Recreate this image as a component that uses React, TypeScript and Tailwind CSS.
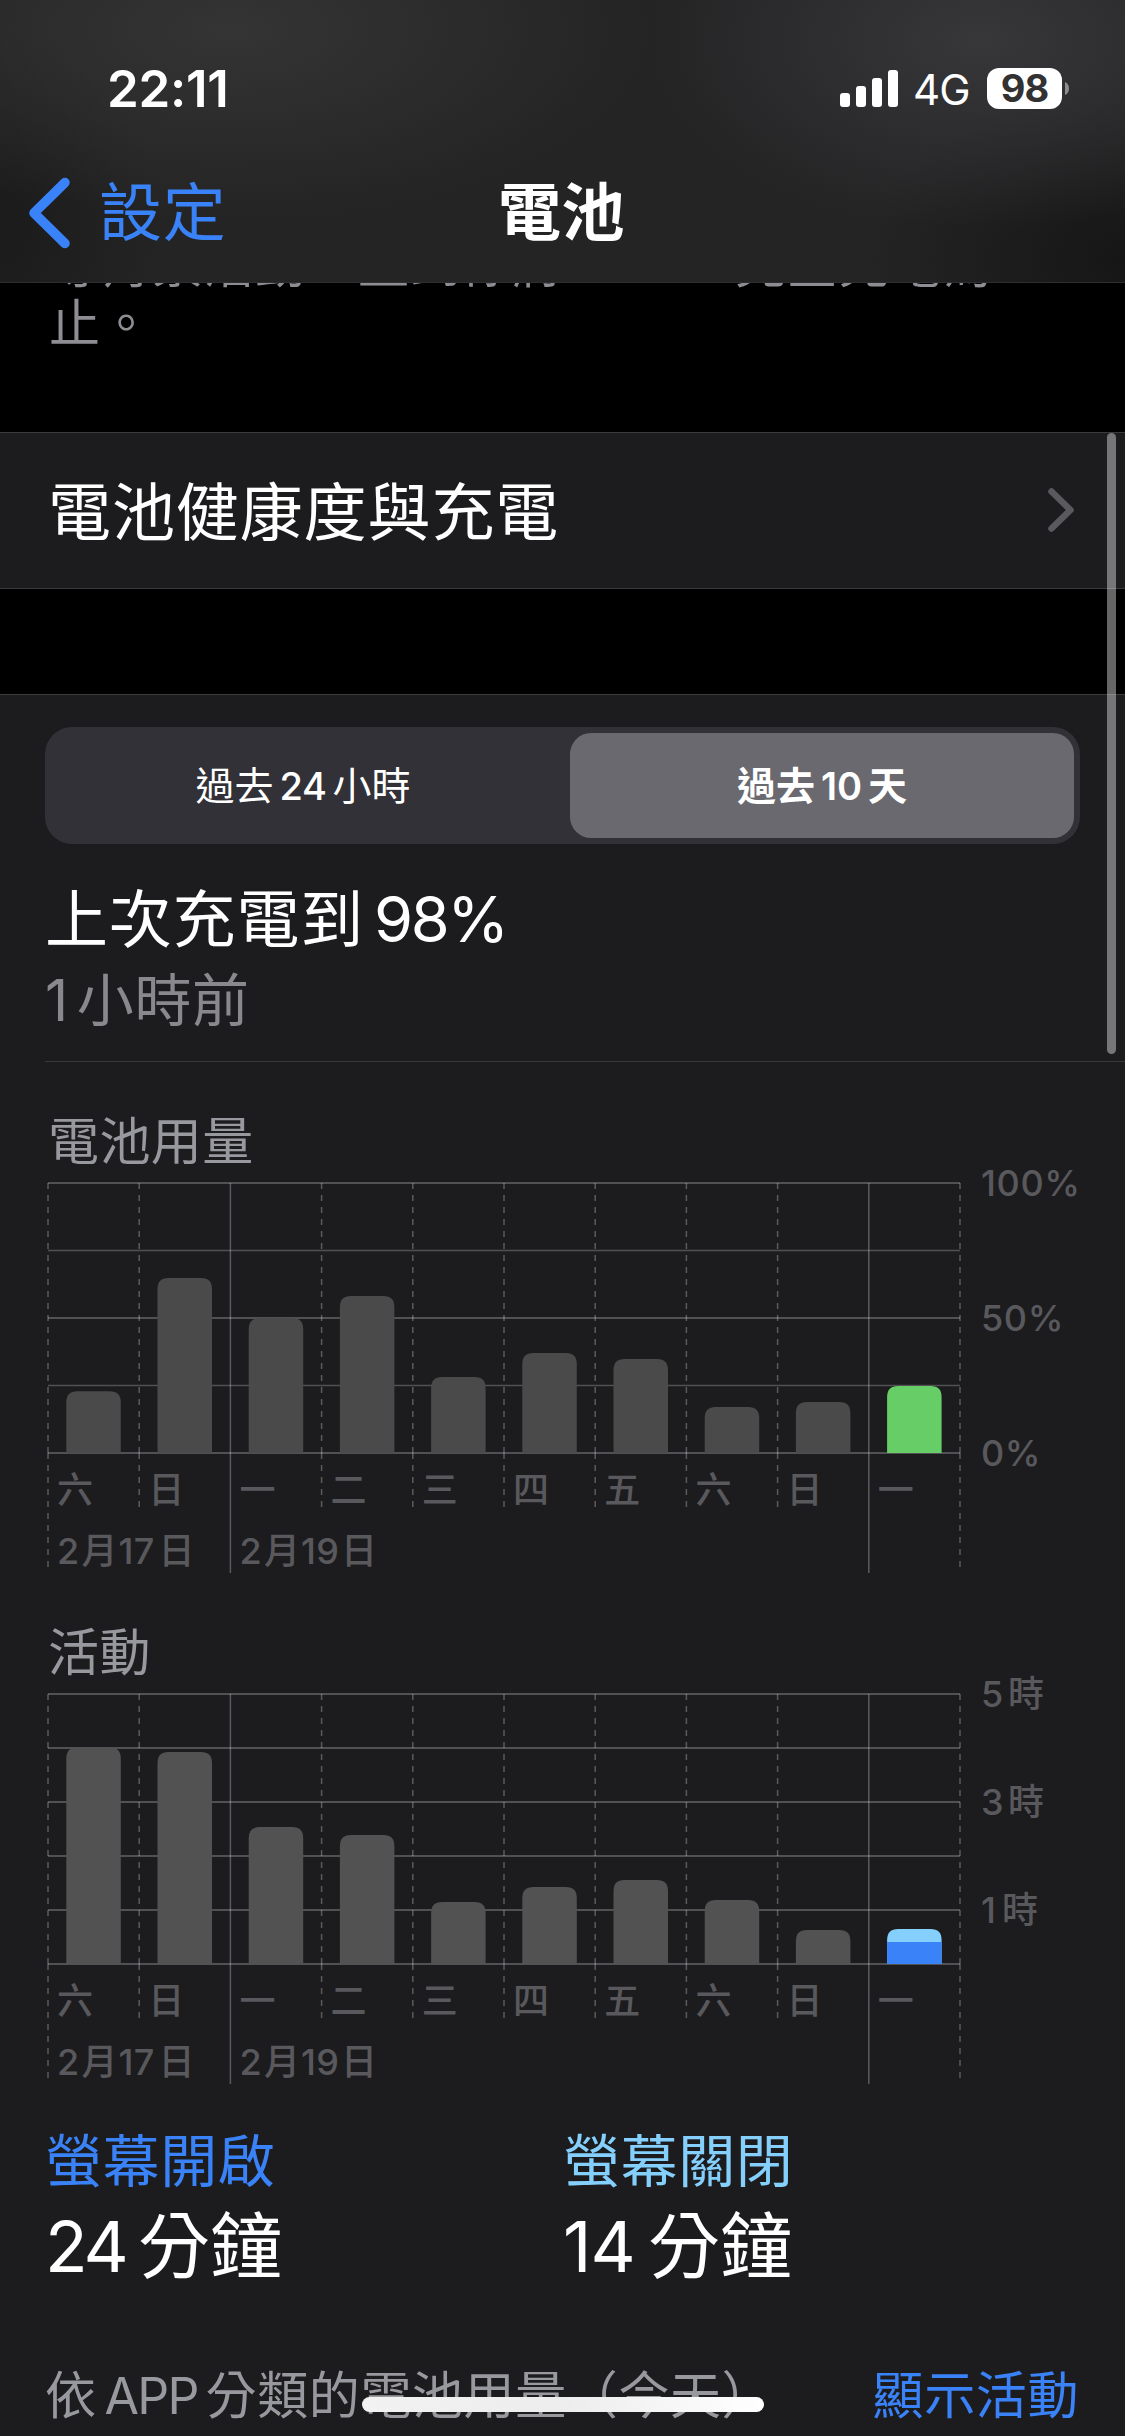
import type { ReactNode } from "react";

type Segment = { top: number; bottom: number; color: string };
type Bar = { top: number; fill: string; split?: Segment };
type AxisLabel = { y: number; num: string; unit?: string; unitX?: number };
type GridLine = { y: number; weight: number };

const X0 = 48;
const STEP = 91.2;
const DAYS = ["六", "日", "一", "二", "三", "四", "五", "六", "日", "一"];

const FONT = 'Inter, "Noto Sans CJK TC", sans-serif';

function DateLabel({ x, day }: { x: number; day: string }) {
  return (
    <>
      <text x={x + 9} y={392.5}>2</text>
      <text x={x + 33.5} y={392.5}>月</text>
      <text x={x + 70.5} y={392.5} letterSpacing="0.3">{day}</text>
      <text x={x + 110.5} y={392.5}>日</text>
    </>
  );
}

function Chart({ base, grid, bars, labels }: { base: number; grid: GridLine[]; bars: Bar[]; labels: AxisLabel[] }) {
  return (
    <svg className="block h-[440px] w-[1125px] overflow-visible" viewBox="0 0 1125 440" fontFamily={FONT}>
      {grid.map((g) => (
        <line key={g.y} x1={X0} x2={960} y1={g.y} y2={g.y} stroke="#515154" strokeWidth={g.weight} />
      ))}
      {bars.map((b, i) => {
        const x = X0 + i * STEP + 18.3;
        return (
          <g key={i}>
            <path
              d={`M${x} ${base} V${b.top + 11} Q${x} ${b.top} ${x + 11} ${b.top} H${x + 43.5} Q${x + 54.5} ${b.top} ${x + 54.5} ${b.top + 11} V${base} Z`}
              fill={b.fill}
            />
            {b.split && (
              <rect x={x} y={b.split.top} width={54.5} height={b.split.bottom - b.split.top} fill={b.split.color} />
            )}
          </g>
        );
      })}
      {Array.from({ length: 11 }, (_, i) => {
        const x = X0 + i * STEP;
        const solid = i === 2 || i === 9;
        const end = solid ? 402 : i === 0 || i === 10 ? 396 : 336;
        return (
          <path
            key={i}
            d={`M${x} 12V${base}M${x} ${base}V${end}`}
            stroke="#ebebf5"
            strokeOpacity={0.3}
            strokeWidth={1.5}
            strokeDasharray={solid ? undefined : "6 6"}
          />
        );
      })}
      <g fill="#59595d" fontSize={36} fontWeight={500}>
        {DAYS.map((d, i) => (
          <text key={i} x={X0 + i * STEP + 9} y={332}>{d}</text>
        ))}
        <DateLabel x={X0} day="17" />
        <DateLabel x={X0 + 2 * STEP} day="19" />
        {labels.map((l) => (
          <g key={l.y}>
            <text x={981} y={l.y + 13} letterSpacing="0.6">{l.num}</text>
            {l.unit && <text x={l.unitX} y={l.y + 13}>{l.unit}</text>}
          </g>
        ))}
      </g>
    </svg>
  );
}

const GRAY1 = "#4a4a4a";
const GRAY2 = "#525252";

const usageBars: Bar[] = [220.3, 107, 147, 125, 206, 182, 188, 236, 231]
  .map((top): Bar => ({ top, fill: GRAY1 }))
  .concat([{ top: 215, fill: "#67ce67" }]);

const activityBars: Bar[] = [65.5, 70, 145, 153, 220, 205, 198, 218, 248]
  .map((top): Bar => ({ top, fill: GRAY2 }))
  .concat([{ top: 247, fill: "#84cffb", split: { top: 260, bottom: 282, color: "#3a82f7" } }]);

function SectionTitle({ children, className }: { children: ReactNode; className: string }) {
  return <h2 className={`pl-[48px] text-[51px] leading-[60px] tracking-[0.4px] text-[#98989f] ${className}`}>{children}</h2>;
}

function Stat({ label, color, value, gap }: { label: string; color: string; value: string; gap: string }) {
  return (
    <div>
      <div className={`text-[57px] leading-[64px] tracking-[0.6px] ${color}`}>{label}</div>
      <div className="mt-[10px] text-[72px] leading-[84px] text-white">
        <span className={`inline-block text-[70px] leading-[84px] ${gap}`}>{value}</span>分鐘
      </div>
    </div>
  );
}

function Header() {
  return (
    <header className="absolute inset-x-0 top-0 z-10 h-[283px] border-b border-[#2e2e30] bg-[#242425] bg-[radial-gradient(ellipse_420px_190px_at_230px_30px,#343434_0%,transparent_100%),radial-gradient(ellipse_330px_190px_at_980px_40px,#37373a_0%,transparent_100%),radial-gradient(ellipse_260px_180px_at_1125px_260px,#161616_0%,transparent_100%),radial-gradient(ellipse_160px_200px_at_0px_230px,#1b1b1b_0%,transparent_100%)]">
      <div className="flex h-[177px] items-center justify-between pl-[107px] pr-[56px]">
        <span className="text-[51px] font-semibold leading-[60px] tracking-[-0.3px] text-white">22:11</span>
        <div className="flex items-center">
          <svg className="h-[37px] w-[58px]" viewBox="0 0 58 37" fill="white">
            <rect x="0" y="23" width="10" height="14" rx="3" />
            <rect x="16" y="16" width="10" height="21" rx="3" />
            <rect x="32" y="8" width="10" height="29" rx="3" />
            <rect x="48" y="0" width="10" height="37" rx="3" />
          </svg>
          <span className="ml-[15px] w-[58px] pt-[2px] text-[42px] leading-[44px] tracking-[-1px] text-white">4G</span>
          <div className="ml-[16px] flex h-[41px] w-[75px] items-center justify-center rounded-[12px] bg-white text-[38px] font-bold leading-[41px] tracking-[-1px] text-[#323233]">98</div>
          <svg className="ml-[3px] h-[13px] w-[4px]" viewBox="0 0 4 13">
            <path d="M0 0C2.5 1 4 3.500 4 6.500S2.500 12 0 13Z" fill="#8e8e90" />
          </svg>
        </div>
      </div>
      <nav className="grid h-[70px] grid-cols-3 items-center">
        <div className="flex items-center pl-[28px]">
          <svg className="h-[72px] w-[43px]" viewBox="0 0 43 72" fill="none" stroke="#3a82f7" strokeWidth="9.500" strokeLinecap="round" strokeLinejoin="round">
            <path d="M37 5.500 L6 36 L37 66.500" />
          </svg>
          <span className="-mt-[3px] ml-[28px] text-[63px] leading-[72px] tracking-[0.8px] text-[#3a82f7]">設定</span>
        </div>
        <h1 className="-mt-[3px] pr-[2px] text-center text-[63px] font-bold leading-[72px] tracking-[0.5px] text-white">電池</h1>
      </nav>
    </header>
  );
}

export default function App() {
  return (
    <div className="relative h-[2436px] w-[1125px] overflow-hidden bg-black font-[Inter,'Noto_Sans_CJK_TC',sans-serif]">
      <Header />

      <p className="h-[432px] whitespace-nowrap pl-[49px] pt-[235px] text-[51px] leading-[59px] tracking-[0.5px] text-[#8d8d93]">
        等背景活動，直到你將<span className="inline-block w-[171px] pl-[8px]">iPhone</span>完全充電為
        <br />
        止。
      </p>

      <div className="flex h-[157px] items-center justify-between border-y border-[#3b3b3e] bg-[#1c1c1e] pl-[48px] pr-[50px]">
        <span className="pt-[3px] text-[63px] leading-[72px] tracking-[0.9px] text-white">電池健康度與充電</span>
        <svg className="mb-[2px] h-[46px] w-[28px]" viewBox="0 0 28 46" fill="none" stroke="#5a5a5e" strokeWidth="6.500" strokeLinecap="round" strokeLinejoin="round">
          <path d="M4.500 4.500 L23.500 23 L4.500 41.500" />
        </svg>
      </div>

      <main className="mt-[105px] h-[1742px] border-t border-[#3b3b3e] bg-[#1c1c1e]">
        <div className="ml-[45px] mt-[32px] flex h-[117px] w-[1035px] rounded-[27px] bg-[#323137] p-[6px] text-[39px] leading-[48px] text-white">
          <div className="flex w-[519px] items-center justify-center pr-[15px]">
            過去<span className="mx-[6px] text-[38px] font-medium tracking-[-0.5px]">24</span>小時
          </div>
          <div className="flex flex-1 items-center justify-center rounded-[21px] bg-[#6a696f] font-bold">
            過去<span className="mx-[6px] text-[38px] font-semibold">10</span>天
          </div>
        </div>

        <div className="ml-[45px] border-b border-[#38383b] pb-[28px] pt-[39px]">
          <div className="text-[63px] leading-[72px] tracking-[0.8px] text-white">
            上次充電到<span className="ml-[10px] text-[63px] tracking-[-2.4px]">98%</span>
          </div>
          <div className="mt-[14px] text-[57px] leading-[64px] tracking-[0.6px] text-[#89898d]">
            <span className="mr-[8px]">1</span>小時前
          </div>
        </div>

        <SectionTitle className="mt-[50px]">電池用量</SectionTitle>
        <div className="-mt-px">
          <Chart
            base={282}
            grid={[
              { y: 12, weight: 2 },
              { y: 79.5, weight: 1.3 },
              { y: 147, weight: 2 },
              { y: 214.5, weight: 1.3 },
              { y: 282, weight: 2 },
            ]}
            bars={usageBars}
            labels={[
              { y: 12, num: "100%" },
              { y: 147, num: "50%" },
              { y: 282, num: "0%" },
            ]}
          />
        </div>

        <SectionTitle className="mt-[12px]">活動</SectionTitle>
        <div className="-mt-px">
          <Chart
            base={282}
            grid={[12, 66, 120, 174, 228, 282].map((y) => ({ y, weight: 2 }))}
            bars={activityBars}
            labels={[
              { y: 12, num: "5", unit: "時", unitX: 1008 },
              { y: 120, num: "3", unit: "時", unitX: 1008 },
              { y: 228, num: "1", unit: "時", unitX: 1002 },
            ]}
          />
        </div>

        <div className="mt-[8px] grid grid-cols-[518px_1fr] pl-[45px]">
          <Stat label="螢幕開啟" color="text-[#3a82f7]" value="24" gap="w-[93px] tracking-[-3px]" />
          <Stat label="螢幕關閉" color="text-[#84cffb]" value="14" gap="w-[85px] tracking-[-1px]" />
        </div>

        <div className="mt-[77px] flex justify-between pl-[45px] pr-[46px] text-[51px] leading-[60px] tracking-[0.6px]">
          <span className="whitespace-nowrap text-[#98989f]">
            依<span className="mx-[8px] text-[50px] tracking-[-1.8px]">APP</span>分類的電池用量（今天）
          </span>
          <span className="text-[#3a82f7]">顯示活動</span>
        </div>
      </main>

      <div className="absolute left-[1107px] top-[433px] h-[621px] w-[9px] rounded-full bg-white/40" />
      <div className="absolute left-[362px] top-[2397px] h-[15px] w-[402px] rounded-full bg-gradient-to-r from-[#f2f2f2] via-[#ededed] to-white" />
    </div>
  );
}
